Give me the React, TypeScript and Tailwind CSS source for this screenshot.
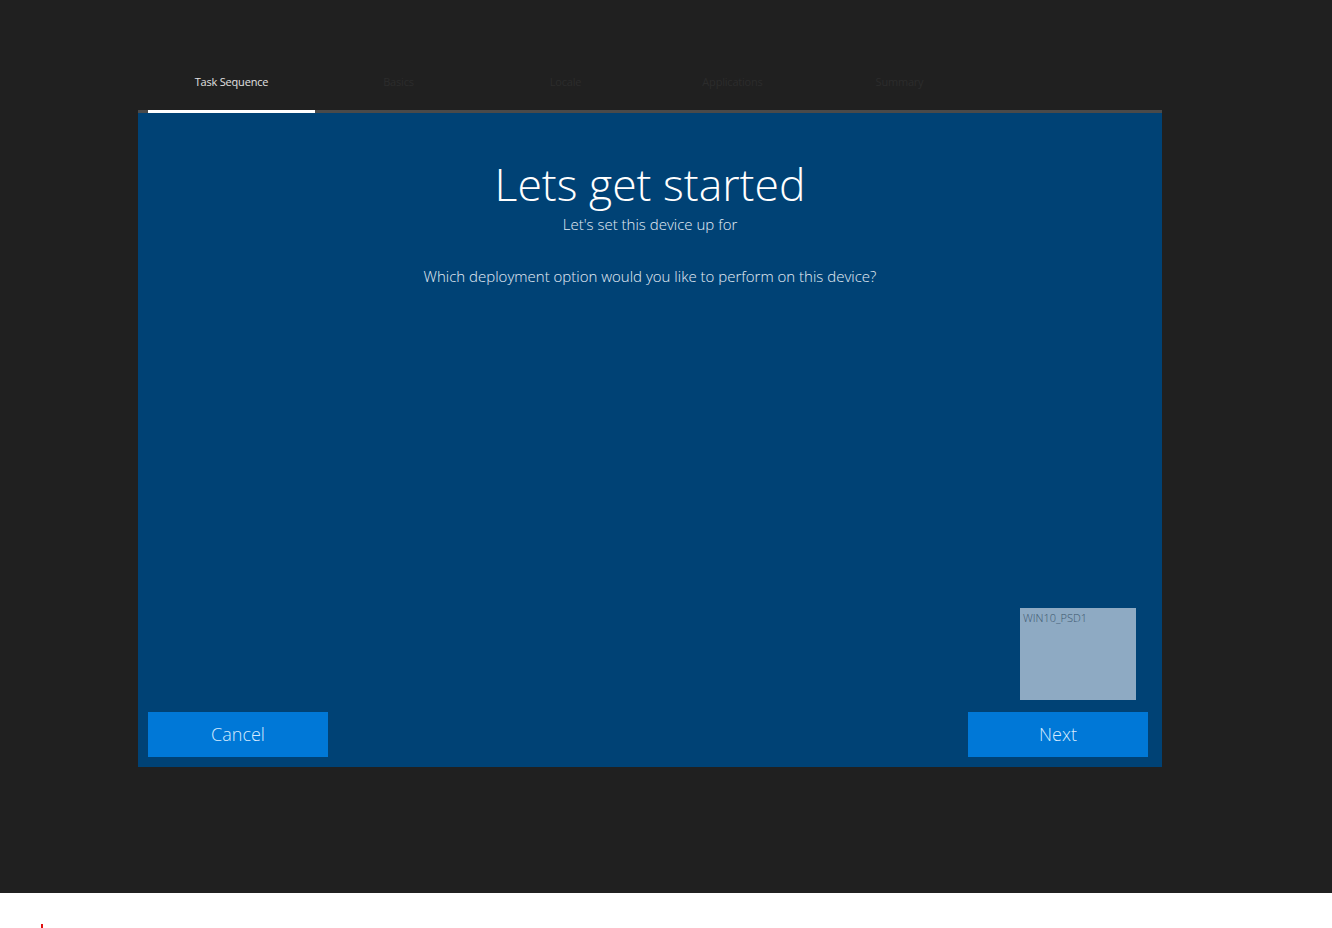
const tabs = ["Task Sequence", "Basics", "Locale", "Applications", "Summary"];

export default function App() {
  return (
    <div className="w-[1332px] h-[928px] bg-white font-['Open_Sans','Noto_Sans',sans-serif] overflow-hidden">
      <div className="h-[893px] bg-[#202020] pt-[72px] px-[138px]">
        <div className="w-[1024px]">
          {/* wizard tabs */}
          <div className="flex pl-[10px] h-[38px]">
            {tabs.map((t, i) => (
              <div
                key={t}
                className={`w-[167px] pt-[2px] text-center text-[11px] leading-4 tracking-[-0.2px] ${
                  i === 0 ? "text-[#e0e0e0]" : "text-[#2c2c2c]"
                }`}
              >
                {t}
              </div>
            ))}
          </div>
          <div className="h-[3px] bg-[#4a4a4a] pl-[10px]">
            <div className="w-[167px] h-[3px] bg-white" />
          </div>

          {/* panel */}
          <div className="h-[654px] bg-[#004275] flex flex-col text-white">
            <div className="flex flex-col items-center pt-[43px]">
              <div className="text-[44.5px] leading-[56px] font-light">Lets get started</div>
              <div className="text-[15px] leading-5 font-light text-[#e4edf5] mt-[2px]">
                Let's set this device up for
              </div>
              <div className="text-[15px] leading-5 font-light text-[#e4edf5] mt-[32px]">
                Which deployment option would you like to perform on this device?
              </div>
            </div>
            <div className="flex-1" />
            <div className="flex justify-end pr-[26px] mb-[12px]">
              <div className="w-[116px] h-[92px] bg-[#8eaac3] px-[3px] pt-[2px] text-[11px] leading-4 font-light text-[#3c566e]">
                WIN10_PSD1
              </div>
            </div>
            <div className="flex justify-between pl-[10px] pr-[14px] pb-[10px]">
              <button className="w-[180px] h-[45px] bg-[#0078d7] text-[18px] font-light text-[#d6ecff]">
                Cancel
              </button>
              <button className="w-[180px] h-[45px] bg-[#0078d7] text-[18px] font-light text-[#d6ecff]">
                Next
              </button>
            </div>
          </div>
        </div>
      </div>
      <div className="pl-[41px] pt-[31px]">
        <div className="w-[2px] h-[4px] bg-[#e01010]" />
      </div>
    </div>
  );
}
